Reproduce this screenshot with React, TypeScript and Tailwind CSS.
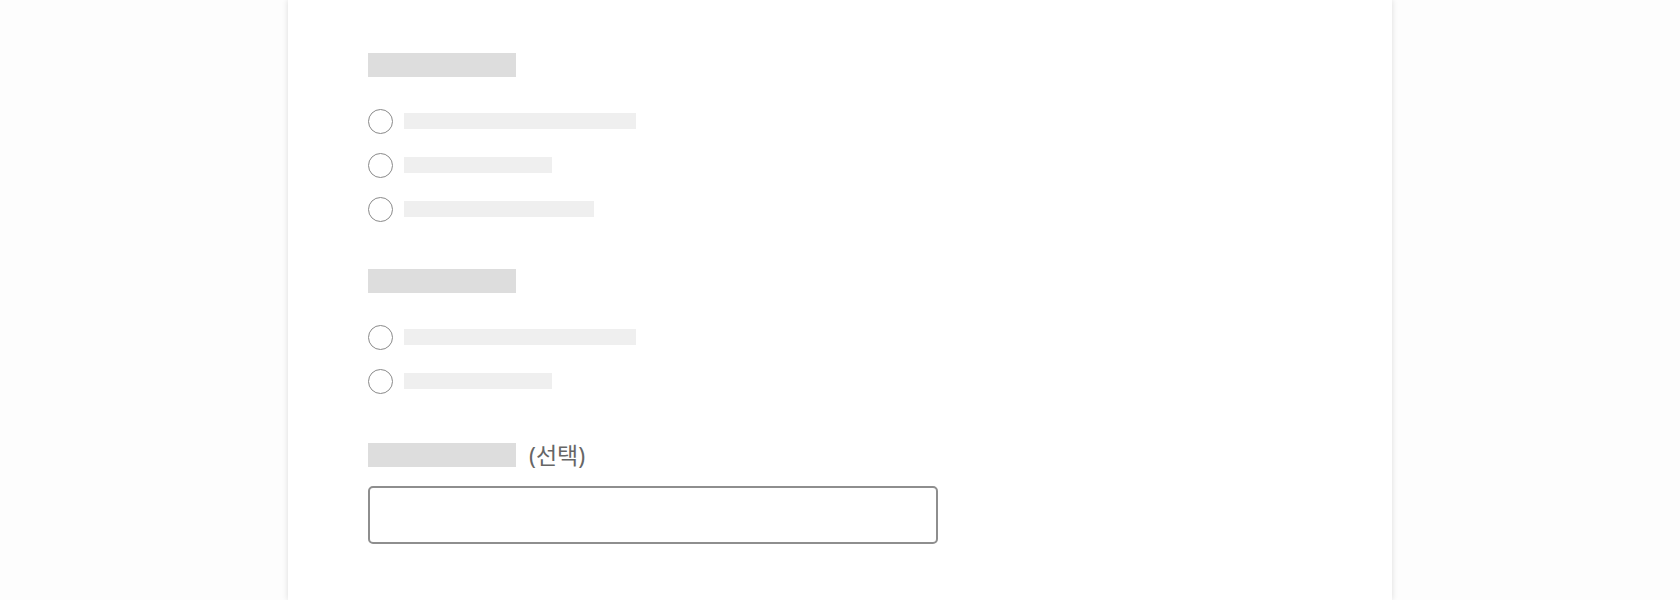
import React from "react";

const groups = [
  { label: 148, options: [232, 148, 190] },
  { label: 148, options: [232, 148] },
];

function Radio() {
  return (
    <span className="block h-[25px] w-[25px] shrink-0 rounded-full border border-[#8a8a8a] bg-white" />
  );
}

export default function App() {
  return (
    <div className="min-h-[600px] w-full bg-[#fdfdfd] font-['Noto_Sans','Noto_Sans_CJK_KR',sans-serif]">
      <div className="mx-auto h-[600px] w-[1104px] bg-white px-[80px] pt-[53px] shadow-[0_0_6px_rgba(0,0,0,0.14)]">
        {groups.map((g, gi) => (
          <div key={gi} className={gi === 0 ? "mb-[38px]" : "mb-[40px]"}>
            <div className="h-[24px] w-[148px] bg-[#dddddd]" />
            <div className="mt-[22px] flex flex-col">
              {g.options.map((w, i) => (
                <div key={i} className="flex h-[44px] items-center gap-[11px]">
                  <Radio />
                  <span className="block h-[16px] bg-[#efefef]" style={{ width: w }} />
                </div>
              ))}
            </div>
          </div>
        ))}
        <div className="flex h-[24px] items-center gap-[13px]">
          <div className="h-[24px] w-[148px] bg-[#dddddd]" />
          <span className="text-[23px] leading-none text-[#666666]">(선택)</span>
        </div>
        <input
          type="text"
          className="mt-[19px] block h-[58px] w-[570px] rounded-[5px] border-2 border-[#8e8e8e] bg-white px-3 outline-none"
        />
      </div>
    </div>
  );
}
